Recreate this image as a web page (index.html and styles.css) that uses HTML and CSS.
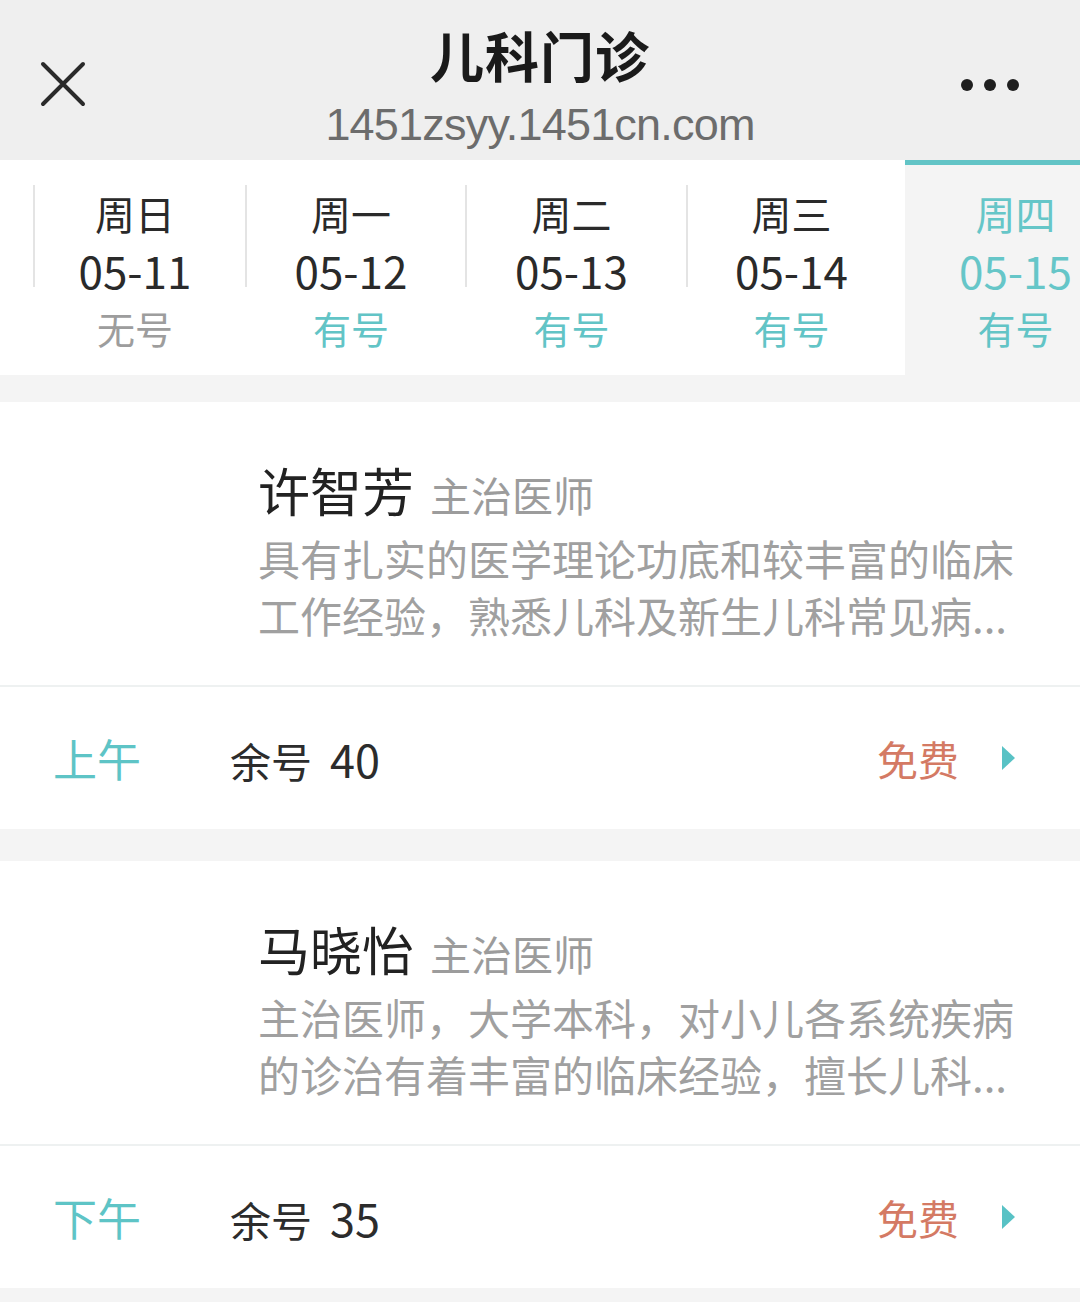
FILE: index.html
```html
<!DOCTYPE html>
<html lang="zh">
<head>
<meta charset="utf-8">
<title>儿科门诊</title>
<link rel="stylesheet" href="styles.css">
</head>
<body>
<header class="topbar">
  <div class="topbar-left">
    <svg class="close-icon" width="46" height="46" viewBox="0 0 46 46">
      <path d="M3 3 L43 43 M43 3 L3 43" stroke="#2a2a2a" stroke-width="4" stroke-linecap="round" fill="none"/>
    </svg>
  </div>
  <div class="topbar-center">
    <div class="title">儿科门诊</div>
    <div class="url">1451zsyy.1451cn.com</div>
  </div>
  <div class="topbar-right">
    <svg class="more-icon" width="60" height="14" viewBox="0 0 60 14">
      <circle cx="7" cy="7" r="6" fill="#1f1f1f"/>
      <circle cx="30" cy="7" r="6" fill="#1f1f1f"/>
      <circle cx="53" cy="7" r="6" fill="#1f1f1f"/>
    </svg>
  </div>
</header>

<nav class="tabs">
  <div class="tab-lead"></div>
  <div class="tab">
    <span class="sep"></span>
    <div class="tab-body">
      <div class="day">周日</div>
      <div class="date">05-11</div>
      <div class="status none">无号</div>
    </div>
  </div>
  <div class="tab">
    <span class="sep"></span>
    <div class="tab-body">
      <div class="day">周一</div>
      <div class="date">05-12</div>
      <div class="status">有号</div>
    </div>
  </div>
  <div class="tab">
    <span class="sep"></span>
    <div class="tab-body">
      <div class="day">周二</div>
      <div class="date">05-13</div>
      <div class="status">有号</div>
    </div>
  </div>
  <div class="tab">
    <span class="sep"></span>
    <div class="tab-body">
      <div class="day">周三</div>
      <div class="date">05-14</div>
      <div class="status">有号</div>
    </div>
  </div>
  <div class="tab active">
    <div class="tab-body">
      <div class="day">周四</div>
      <div class="date">05-15</div>
      <div class="status">有号</div>
    </div>
  </div>
</nav>

<main class="list">
  <section class="card">
    <div class="doctor">
      <div class="name-row"><span class="name">许智芳</span><span class="rank">主治医师</span></div>
      <div class="desc">具有扎实的医学理论功底和较丰富的临床工作经验，熟悉儿科及新生儿科常见病...</div>
    </div>
    <div class="slot">
      <span class="period">上午</span>
      <span class="remain">余号<span class="num">40</span></span>
      <span class="price">免费</span>
      <span class="arrow"></span>
    </div>
  </section>

  <section class="card">
    <div class="doctor">
      <div class="name-row"><span class="name">马晓怡</span><span class="rank">主治医师</span></div>
      <div class="desc">主治医师，大学本科，对小儿各系统疾病的诊治有着丰富的临床经验，擅长儿科...</div>
    </div>
    <div class="slot">
      <span class="period">下午</span>
      <span class="remain">余号<span class="num">35</span></span>
      <span class="price">免费</span>
      <span class="arrow"></span>
    </div>
  </section>
</main>
</body>
</html>
```

FILE: styles.css
```css
* { box-sizing: border-box; }

html, body {
  margin: 0;
  padding: 0;
}

body {
  width: 1080px;
  height: 1302px;
  overflow: hidden;
  background: #f4f4f4;
  font-family: "Noto Sans CJK SC", "Noto Sans", sans-serif;
  color: #333;
}

/* ---------- top bar ---------- */
.topbar {
  height: 160px;
  background: #efefef;
  display: grid;
  grid-template-columns: 1fr auto 1fr;
}

.topbar-left {
  padding-left: 40px;
  padding-top: 61px;
}

.close-icon { display: block; }

.topbar-center {
  display: flex;
  flex-direction: column;
  align-items: center;
  padding-top: 20px;
}

.title {
  font-size: 54px;
  font-weight: 700;
  line-height: 70px;
  color: #1a1a1a;
  letter-spacing: 1px;
}

.url {
  margin-top: 10px;
  font-family: "Liberation Sans", Arial, sans-serif;
  font-size: 45px;
  line-height: 50px;
  color: #6c6c6c;
  letter-spacing: -0.8px;
}

.topbar-right {
  display: flex;
  justify-content: flex-end;
  padding-right: 60px;
  padding-top: 78px;
}

.more-icon { display: block; }

/* ---------- date tabs ---------- */
.tabs {
  display: flex;
  height: 215px;
  background: #ffffff;
  overflow: hidden;
}

.tab-lead {
  flex: 0 0 33px;
}

.tab {
  display: flex;
  align-items: flex-start;
  flex: 0 0 auto;
}

.tab:nth-child(2) { width: 212px; }
.tab:nth-child(3) { width: 220px; }
.tab:nth-child(4) { width: 221px; }
.tab:nth-child(5) { width: 219px; }

.sep {
  flex: 0 0 2px;
  height: 102px;
  margin-top: 25px;
  background: #e4e4e4;
}

.tab-body {
  flex: 1;
  padding-top: 25px;
  padding-right: 10px;
  text-align: center;
}

.day {
  font-size: 40px;
  line-height: 57px;
  color: #2a2a2a;
}

.date {
  font-size: 44px;
  line-height: 57px;
  color: #2a2a2a;
}

.status {
  font-size: 38px;
  line-height: 57px;
  color: #62c4c6;
}

.status.none { color: #9d9d9d; }

.tab.active {
  width: 221px;
  background: #f4f4f4;
  border-top: 5px solid #62c4c6;
}

.tab.active .tab-body {
  padding-top: 20px;
  padding-right: 0;
}

.tab.active .day,
.tab.active .date {
  color: #66c6c8;
}

/* ---------- doctor list ---------- */
.list {
  padding-top: 27px;
  display: flex;
  flex-direction: column;
  gap: 32px;
}

.card {
  background: #ffffff;
}

.doctor {
  padding: 53px 60px 42px 258px;
  border-bottom: 2px solid #eef1f1;
}

.name-row {
  display: flex;
  align-items: baseline;
  line-height: 70px;
}

.name {
  font-size: 52px;
  font-weight: 400;
  color: #222;
}

.rank {
  margin-left: 16px;
  font-size: 41px;
  color: #9c9c9c;
}

.desc {
  font-size: 42px;
  line-height: 57px;
  color: #a0a0a0;
}

.slot {
  height: 142px;
  display: flex;
  align-items: center;
  padding-left: 53px;
  padding-right: 65px;
}

.period {
  width: 177px;
  font-size: 44px;
  color: #5ec4c6;
}

.remain {
  flex: 1;
  font-size: 41px;
  color: #2c2c2c;
}

.num {
  margin-left: 18px;
  font-size: 45px;
}

.price {
  font-size: 41px;
  color: #d47a64;
}

.arrow {
  width: 0;
  height: 0;
  margin-left: 43px;
  border-top: 12px solid transparent;
  border-bottom: 12px solid transparent;
  border-left: 13px solid #58c2c5;
}
```
